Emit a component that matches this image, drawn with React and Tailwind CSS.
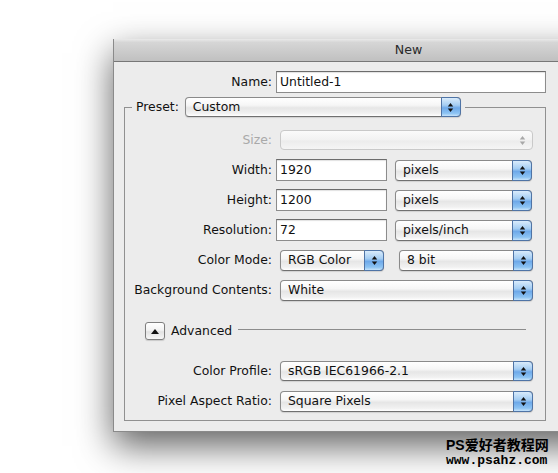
import React from "react";

function Arrows({ color = "#111" }) {
  return (
    <svg width="7" height="11" viewBox="0 0 7 11">
      <path d="M3.5 1 L6.2 4.6 L0.8 4.6 Z" fill={color} />
      <path d="M0.8 6.4 L6.2 6.4 L3.5 10 Z" fill={color} />
    </svg>
  );
}

function Popup({ value, w, h = "h-[21px]", disabled = false }) {
  if (disabled) {
    return (
      <div
        className={`${w} ${h} ml-[4px] flex items-center justify-end rounded-[4px] border border-[#c9c9c9] bg-[linear-gradient(to_bottom,#fbfbfb_0%,#f2f2f2_50%,#ececec_55%,#f5f5f5_100%)] pr-[6px]`}
      >
        <Arrows color="#a8a8a8" />
      </div>
    );
  }
  return (
    <div
      className={`${w} ${h} ml-[4px] flex items-stretch rounded-[4px] border border-[#8a8a8a] border-b-[#707070] bg-[linear-gradient(to_bottom,#ffffff_0%,#f6f6f6_40%,#e6e6e6_55%,#f1f1f1_85%,#ffffff_100%)] shadow-[0_1px_1px_rgba(0,0,0,0.12)]`}
    >
      <div className="flex flex-1 items-center pl-[7px] leading-none text-[#111]">{value}</div>
      <div className="-my-px -mr-px flex w-[20px] items-center justify-center rounded-r-[4px] border border-[#4f74a6] bg-[linear-gradient(to_bottom,#d9ebfb_0%,#a4cdf3_40%,#6ea9e9_55%,#8cc3f3_85%,#c6e3fb_100%)]">
        <Arrows />
      </div>
    </div>
  );
}

function Field({ value, w }) {
  return (
    <div
      className={`${w} flex h-[22px] items-center border border-[#8c8c8c] border-t-[#6c6c6c] bg-white pl-[3px] leading-none text-[#111] shadow-[inset_0_1px_1px_rgba(0,0,0,0.12)]`}
    >
      {value}
    </div>
  );
}

function Row({ label, children, disabled = false }) {
  return (
    <div className="flex h-[30px] items-center gap-[4px]">
      <div className={`w-[147px] text-right ${disabled ? "text-[#a9a9a9]" : "text-[#111]"}`}>{label}</div>
      <div className="flex items-center">{children}</div>
    </div>
  );
}

export default function App() {
  return (
    <div className="relative h-[473px] w-[558px] overflow-hidden bg-white font-['DejaVu_Sans','Noto_Sans',sans-serif] text-[12.4px]">
      <div className="ml-[113px] mt-[39px] flex h-[393px] w-[590px] flex-col border-l border-b border-[#8a8a8a] shadow-[0_14px_34px_rgba(0,0,0,0.62)]">
        <div className="flex h-[23px] items-center justify-center border-b border-[#777777] bg-[linear-gradient(to_bottom,#eaeaea_0%,#d6d6d6_15%,#c0c0c0_100%)] text-[12.6px] text-[#2a2a2a]">
          New
        </div>
        <div className="flex-1 bg-[#ececec] pl-[10px] pt-[9px]">
          <div className="w-[422px]">
            <div className="flex h-[22px] items-center gap-[4px]">
              <div className="w-[148px] text-right text-[#111]">Name:</div>
              <Field value="Untitled-1" w="w-[270px]" />
            </div>

            <fieldset className="mt-[4px] border border-[#909090] px-0 pb-[4px] pt-[8px]">
              <legend className="ml-[7px] px-[4px]">
                <div className="flex items-center gap-[2px]">
                  <span className="text-[#111]">Preset:</span>
                  <Popup value="Custom" w="w-[276px]" h="h-[20px]" />
                </div>
              </legend>

              <Row label="Size:" disabled>
                <Popup w="w-[253px]" h="h-[20px]" disabled />
              </Row>
              <Row label="Width:">
                <Field value="1920" w="w-[111px]" />
                <div className="ml-[4px]">
                  <Popup value="pixels" w="w-[137px]" />
                </div>
              </Row>
              <Row label="Height:">
                <Field value="1200" w="w-[111px]" />
                <div className="ml-[4px]">
                  <Popup value="pixels" w="w-[137px]" />
                </div>
              </Row>
              <Row label="Resolution:">
                <Field value="72" w="w-[111px]" />
                <div className="ml-[4px]">
                  <Popup value="pixels/inch" w="w-[137px]" />
                </div>
              </Row>
              <Row label="Color Mode:">
                <Popup value="RGB Color" w="w-[104px]" />
                <div className="ml-[11px]">
                  <Popup value="8 bit" w="w-[134px]" />
                </div>
              </Row>
              <Row label="Background Contents:">
                <Popup value="White" w="w-[253px]" />
              </Row>

              <div className="mt-[11px] flex h-[30px] items-center pl-[20px] pr-[19px]">
                <div className="flex h-[18px] w-[20px] items-center justify-center rounded-[3px] border border-[#7e7e7e] bg-[linear-gradient(to_bottom,#ffffff_0%,#f3f3f3_45%,#e2e2e2_55%,#f7f7f7_100%)] shadow-[0_1px_1px_rgba(0,0,0,0.15)]">
                  <svg width="8" height="5" viewBox="0 0 8 5">
                    <path d="M4 0 L8 5 L0 5 Z" fill="#111" />
                  </svg>
                </div>
                <span className="ml-[6px] text-[#111]">Advanced</span>
                <div className="ml-[6px] mb-[3px] h-px flex-1 bg-[#8c8c8c]" />
              </div>

              <div className="mt-[10px]">
                <Row label="Color Profile:">
                  <Popup value="sRGB IEC61966-2.1" w="w-[253px]" h="h-[20px]" />
                </Row>
                <Row label="Pixel Aspect Ratio:">
                  <Popup value="Square Pixels" w="w-[253px]" />
                </Row>
              </div>
            </fieldset>
          </div>
        </div>
      </div>

      <div className="absolute left-[446px] top-[437px] flex flex-col font-bold text-black">
        <div className="font-['Liberation_Sans','Noto_Sans_CJK_SC',sans-serif] text-[14px] leading-[16px]">PS爱好者教程网</div>
        <div className="mt-[1px] font-['Liberation_Mono',monospace] text-[13px] leading-[13px]">www.psahz.com</div>
      </div>
    </div>
  );
}
